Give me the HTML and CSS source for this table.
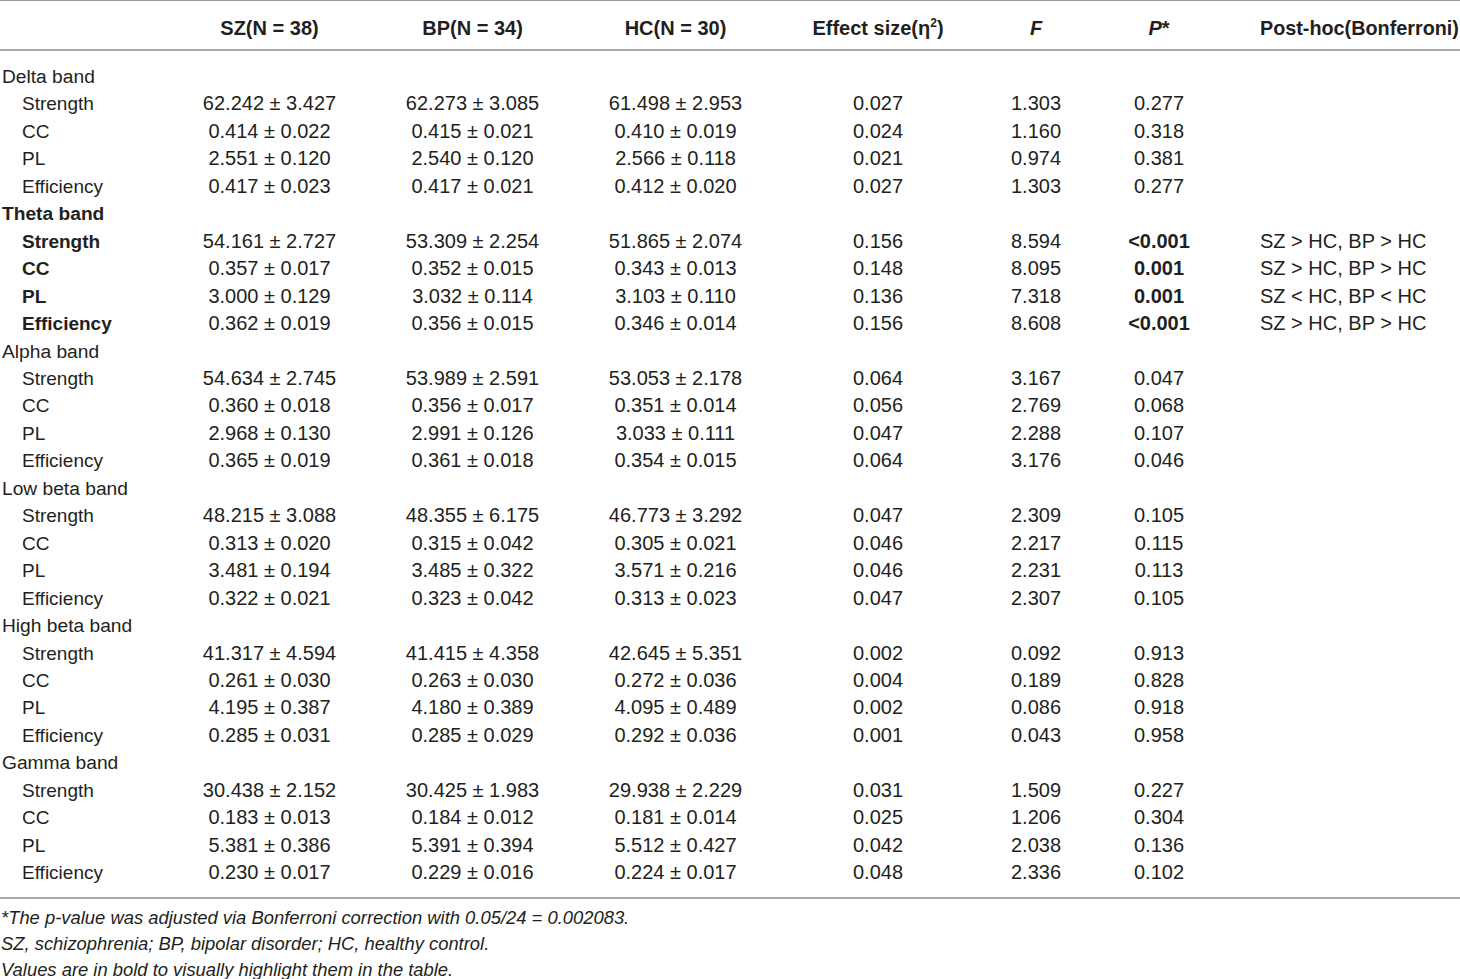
FILE: index.html
```html
<!DOCTYPE html>
<html lang="en">
<head>
    <meta charset="UTF-8">
    <title>Network metrics by frequency band</title>
    <link rel="stylesheet" href="styles.css">
</head>
<body>
    <div class="wrap">
        <table class="stats">
            <colgroup>
                <col class="c-name">
                <col class="c-grp">
                <col class="c-grp">
                <col class="c-grp">
                <col class="c-eff">
                <col class="c-f">
                <col class="c-p">
                <col class="c-post">
            </colgroup>
            <thead>
                <tr>
                    <th></th>
                    <th>SZ(N = 38)</th>
                    <th>BP(N = 34)</th>
                    <th>HC(N = 30)</th>
                    <th>Effect size(&eta;<sup>2</sup>)</th>
                    <th><i>F</i></th>
                    <th><i>P</i>*</th>
                    <th class="post">Post-hoc(Bonferroni)</th>
                </tr>
            </thead>
            <tbody>
                <tr class="first"><td class="band">Delta band</td><td></td><td></td><td></td><td></td><td></td><td></td><td></td></tr>
                <tr><td class="sub">Strength</td><td>62.242 &plusmn; 3.427</td><td>62.273 &plusmn; 3.085</td><td>61.498 &plusmn; 2.953</td><td>0.027</td><td>1.303</td><td>0.277</td><td class="post"></td></tr>
                <tr><td class="sub">CC</td><td>0.414 &plusmn; 0.022</td><td>0.415 &plusmn; 0.021</td><td>0.410 &plusmn; 0.019</td><td>0.024</td><td>1.160</td><td>0.318</td><td class="post"></td></tr>
                <tr><td class="sub">PL</td><td>2.551 &plusmn; 0.120</td><td>2.540 &plusmn; 0.120</td><td>2.566 &plusmn; 0.118</td><td>0.021</td><td>0.974</td><td>0.381</td><td class="post"></td></tr>
                <tr><td class="sub">Efficiency</td><td>0.417 &plusmn; 0.023</td><td>0.417 &plusmn; 0.021</td><td>0.412 &plusmn; 0.020</td><td>0.027</td><td>1.303</td><td>0.277</td><td class="post"></td></tr>

                <tr><td class="band bold">Theta band</td><td></td><td></td><td></td><td></td><td></td><td></td><td></td></tr>
                <tr><td class="sub bold">Strength</td><td>54.161 &plusmn; 2.727</td><td>53.309 &plusmn; 2.254</td><td>51.865 &plusmn; 2.074</td><td>0.156</td><td>8.594</td><td class="bold">&lt;0.001</td><td class="post">SZ &gt; HC, BP &gt; HC</td></tr>
                <tr><td class="sub bold">CC</td><td>0.357 &plusmn; 0.017</td><td>0.352 &plusmn; 0.015</td><td>0.343 &plusmn; 0.013</td><td>0.148</td><td>8.095</td><td class="bold">0.001</td><td class="post">SZ &gt; HC, BP &gt; HC</td></tr>
                <tr><td class="sub bold">PL</td><td>3.000 &plusmn; 0.129</td><td>3.032 &plusmn; 0.114</td><td>3.103 &plusmn; 0.110</td><td>0.136</td><td>7.318</td><td class="bold">0.001</td><td class="post">SZ &lt; HC, BP &lt; HC</td></tr>
                <tr><td class="sub bold">Efficiency</td><td>0.362 &plusmn; 0.019</td><td>0.356 &plusmn; 0.015</td><td>0.346 &plusmn; 0.014</td><td>0.156</td><td>8.608</td><td class="bold">&lt;0.001</td><td class="post">SZ &gt; HC, BP &gt; HC</td></tr>

                <tr><td class="band">Alpha band</td><td></td><td></td><td></td><td></td><td></td><td></td><td></td></tr>
                <tr><td class="sub">Strength</td><td>54.634 &plusmn; 2.745</td><td>53.989 &plusmn; 2.591</td><td>53.053 &plusmn; 2.178</td><td>0.064</td><td>3.167</td><td>0.047</td><td class="post"></td></tr>
                <tr><td class="sub">CC</td><td>0.360 &plusmn; 0.018</td><td>0.356 &plusmn; 0.017</td><td>0.351 &plusmn; 0.014</td><td>0.056</td><td>2.769</td><td>0.068</td><td class="post"></td></tr>
                <tr><td class="sub">PL</td><td>2.968 &plusmn; 0.130</td><td>2.991 &plusmn; 0.126</td><td>3.033 &plusmn; 0.111</td><td>0.047</td><td>2.288</td><td>0.107</td><td class="post"></td></tr>
                <tr><td class="sub">Efficiency</td><td>0.365 &plusmn; 0.019</td><td>0.361 &plusmn; 0.018</td><td>0.354 &plusmn; 0.015</td><td>0.064</td><td>3.176</td><td>0.046</td><td class="post"></td></tr>

                <tr><td class="band">Low beta band</td><td></td><td></td><td></td><td></td><td></td><td></td><td></td></tr>
                <tr><td class="sub">Strength</td><td>48.215 &plusmn; 3.088</td><td>48.355 &plusmn; 6.175</td><td>46.773 &plusmn; 3.292</td><td>0.047</td><td>2.309</td><td>0.105</td><td class="post"></td></tr>
                <tr><td class="sub">CC</td><td>0.313 &plusmn; 0.020</td><td>0.315 &plusmn; 0.042</td><td>0.305 &plusmn; 0.021</td><td>0.046</td><td>2.217</td><td>0.115</td><td class="post"></td></tr>
                <tr><td class="sub">PL</td><td>3.481 &plusmn; 0.194</td><td>3.485 &plusmn; 0.322</td><td>3.571 &plusmn; 0.216</td><td>0.046</td><td>2.231</td><td>0.113</td><td class="post"></td></tr>
                <tr><td class="sub">Efficiency</td><td>0.322 &plusmn; 0.021</td><td>0.323 &plusmn; 0.042</td><td>0.313 &plusmn; 0.023</td><td>0.047</td><td>2.307</td><td>0.105</td><td class="post"></td></tr>

                <tr><td class="band">High beta band</td><td></td><td></td><td></td><td></td><td></td><td></td><td></td></tr>
                <tr><td class="sub">Strength</td><td>41.317 &plusmn; 4.594</td><td>41.415 &plusmn; 4.358</td><td>42.645 &plusmn; 5.351</td><td>0.002</td><td>0.092</td><td>0.913</td><td class="post"></td></tr>
                <tr><td class="sub">CC</td><td>0.261 &plusmn; 0.030</td><td>0.263 &plusmn; 0.030</td><td>0.272 &plusmn; 0.036</td><td>0.004</td><td>0.189</td><td>0.828</td><td class="post"></td></tr>
                <tr><td class="sub">PL</td><td>4.195 &plusmn; 0.387</td><td>4.180 &plusmn; 0.389</td><td>4.095 &plusmn; 0.489</td><td>0.002</td><td>0.086</td><td>0.918</td><td class="post"></td></tr>
                <tr><td class="sub">Efficiency</td><td>0.285 &plusmn; 0.031</td><td>0.285 &plusmn; 0.029</td><td>0.292 &plusmn; 0.036</td><td>0.001</td><td>0.043</td><td>0.958</td><td class="post"></td></tr>

                <tr><td class="band">Gamma band</td><td></td><td></td><td></td><td></td><td></td><td></td><td></td></tr>
                <tr><td class="sub">Strength</td><td>30.438 &plusmn; 2.152</td><td>30.425 &plusmn; 1.983</td><td>29.938 &plusmn; 2.229</td><td>0.031</td><td>1.509</td><td>0.227</td><td class="post"></td></tr>
                <tr><td class="sub">CC</td><td>0.183 &plusmn; 0.013</td><td>0.184 &plusmn; 0.012</td><td>0.181 &plusmn; 0.014</td><td>0.025</td><td>1.206</td><td>0.304</td><td class="post"></td></tr>
                <tr><td class="sub">PL</td><td>5.381 &plusmn; 0.386</td><td>5.391 &plusmn; 0.394</td><td>5.512 &plusmn; 0.427</td><td>0.042</td><td>2.038</td><td>0.136</td><td class="post"></td></tr>
                <tr class="last"><td class="sub">Efficiency</td><td>0.230 &plusmn; 0.017</td><td>0.229 &plusmn; 0.016</td><td>0.224 &plusmn; 0.017</td><td>0.048</td><td>2.336</td><td>0.102</td><td class="post"></td></tr>
            </tbody>
        </table>
        <div class="notes">
            <p>*The p-value was adjusted via Bonferroni correction with 0.05/24 = 0.002083.</p>
            <p>SZ, schizophrenia; BP, bipolar disorder; HC, healthy control.</p>
            <p>Values are in bold to visually highlight them in the table.</p>
        </div>
    </div>
</body>
</html>
```

FILE: styles.css
```css
body {
    margin: 0;
    background: #ffffff;
    font-family: 'Liberation Sans', Arial, sans-serif;
    color: #231f20;
}

.wrap {
    width: 1460px;
}

.stats {
    width: 1460px;
    table-layout: fixed;
    border-collapse: collapse;
    font-size: 20px;
    border-top: 1px solid #9a9a9a;
}

.c-name { width: 168px; }
.c-grp { width: 203px; }
.c-eff { width: 202px; }
.c-f { width: 114px; }
.c-p { width: 132px; }
.c-post { width: 235px; }

.stats th {
    height: 42px;
    padding: 6px 0 0;
    font-weight: bold;
    text-align: center;
    white-space: nowrap;
    border-bottom: 2px solid #a8a8a8;
}

.stats th.post {
    font-size: 19.8px;
}

.stats th sup {
    font-size: 12px;
    line-height: 0;
}

.stats td {
    height: 27.45px;
    padding: 0;
    text-align: center;
    white-space: nowrap;
    line-height: 27.45px;
}

.stats tr.first td {
    padding-top: 12px;
}

.stats tr.last td {
    padding-bottom: 10px;
    border-bottom: 2px solid #a8a8a8;
}

.stats .post {
    text-align: left;
    padding-left: 35px;
}

.stats td.band {
    text-align: left;
    padding-left: 2px;
    font-size: 19.2px;
}

.stats td.sub {
    text-align: left;
    padding-left: 22px;
    font-size: 19px;
}

.bold {
    font-weight: bold;
}

.notes {
    padding-top: 6px;
    font-style: italic;
    font-size: 18.4px;
}

.notes p {
    margin: 0;
    padding-left: 1px;
    line-height: 26px;
}
```
